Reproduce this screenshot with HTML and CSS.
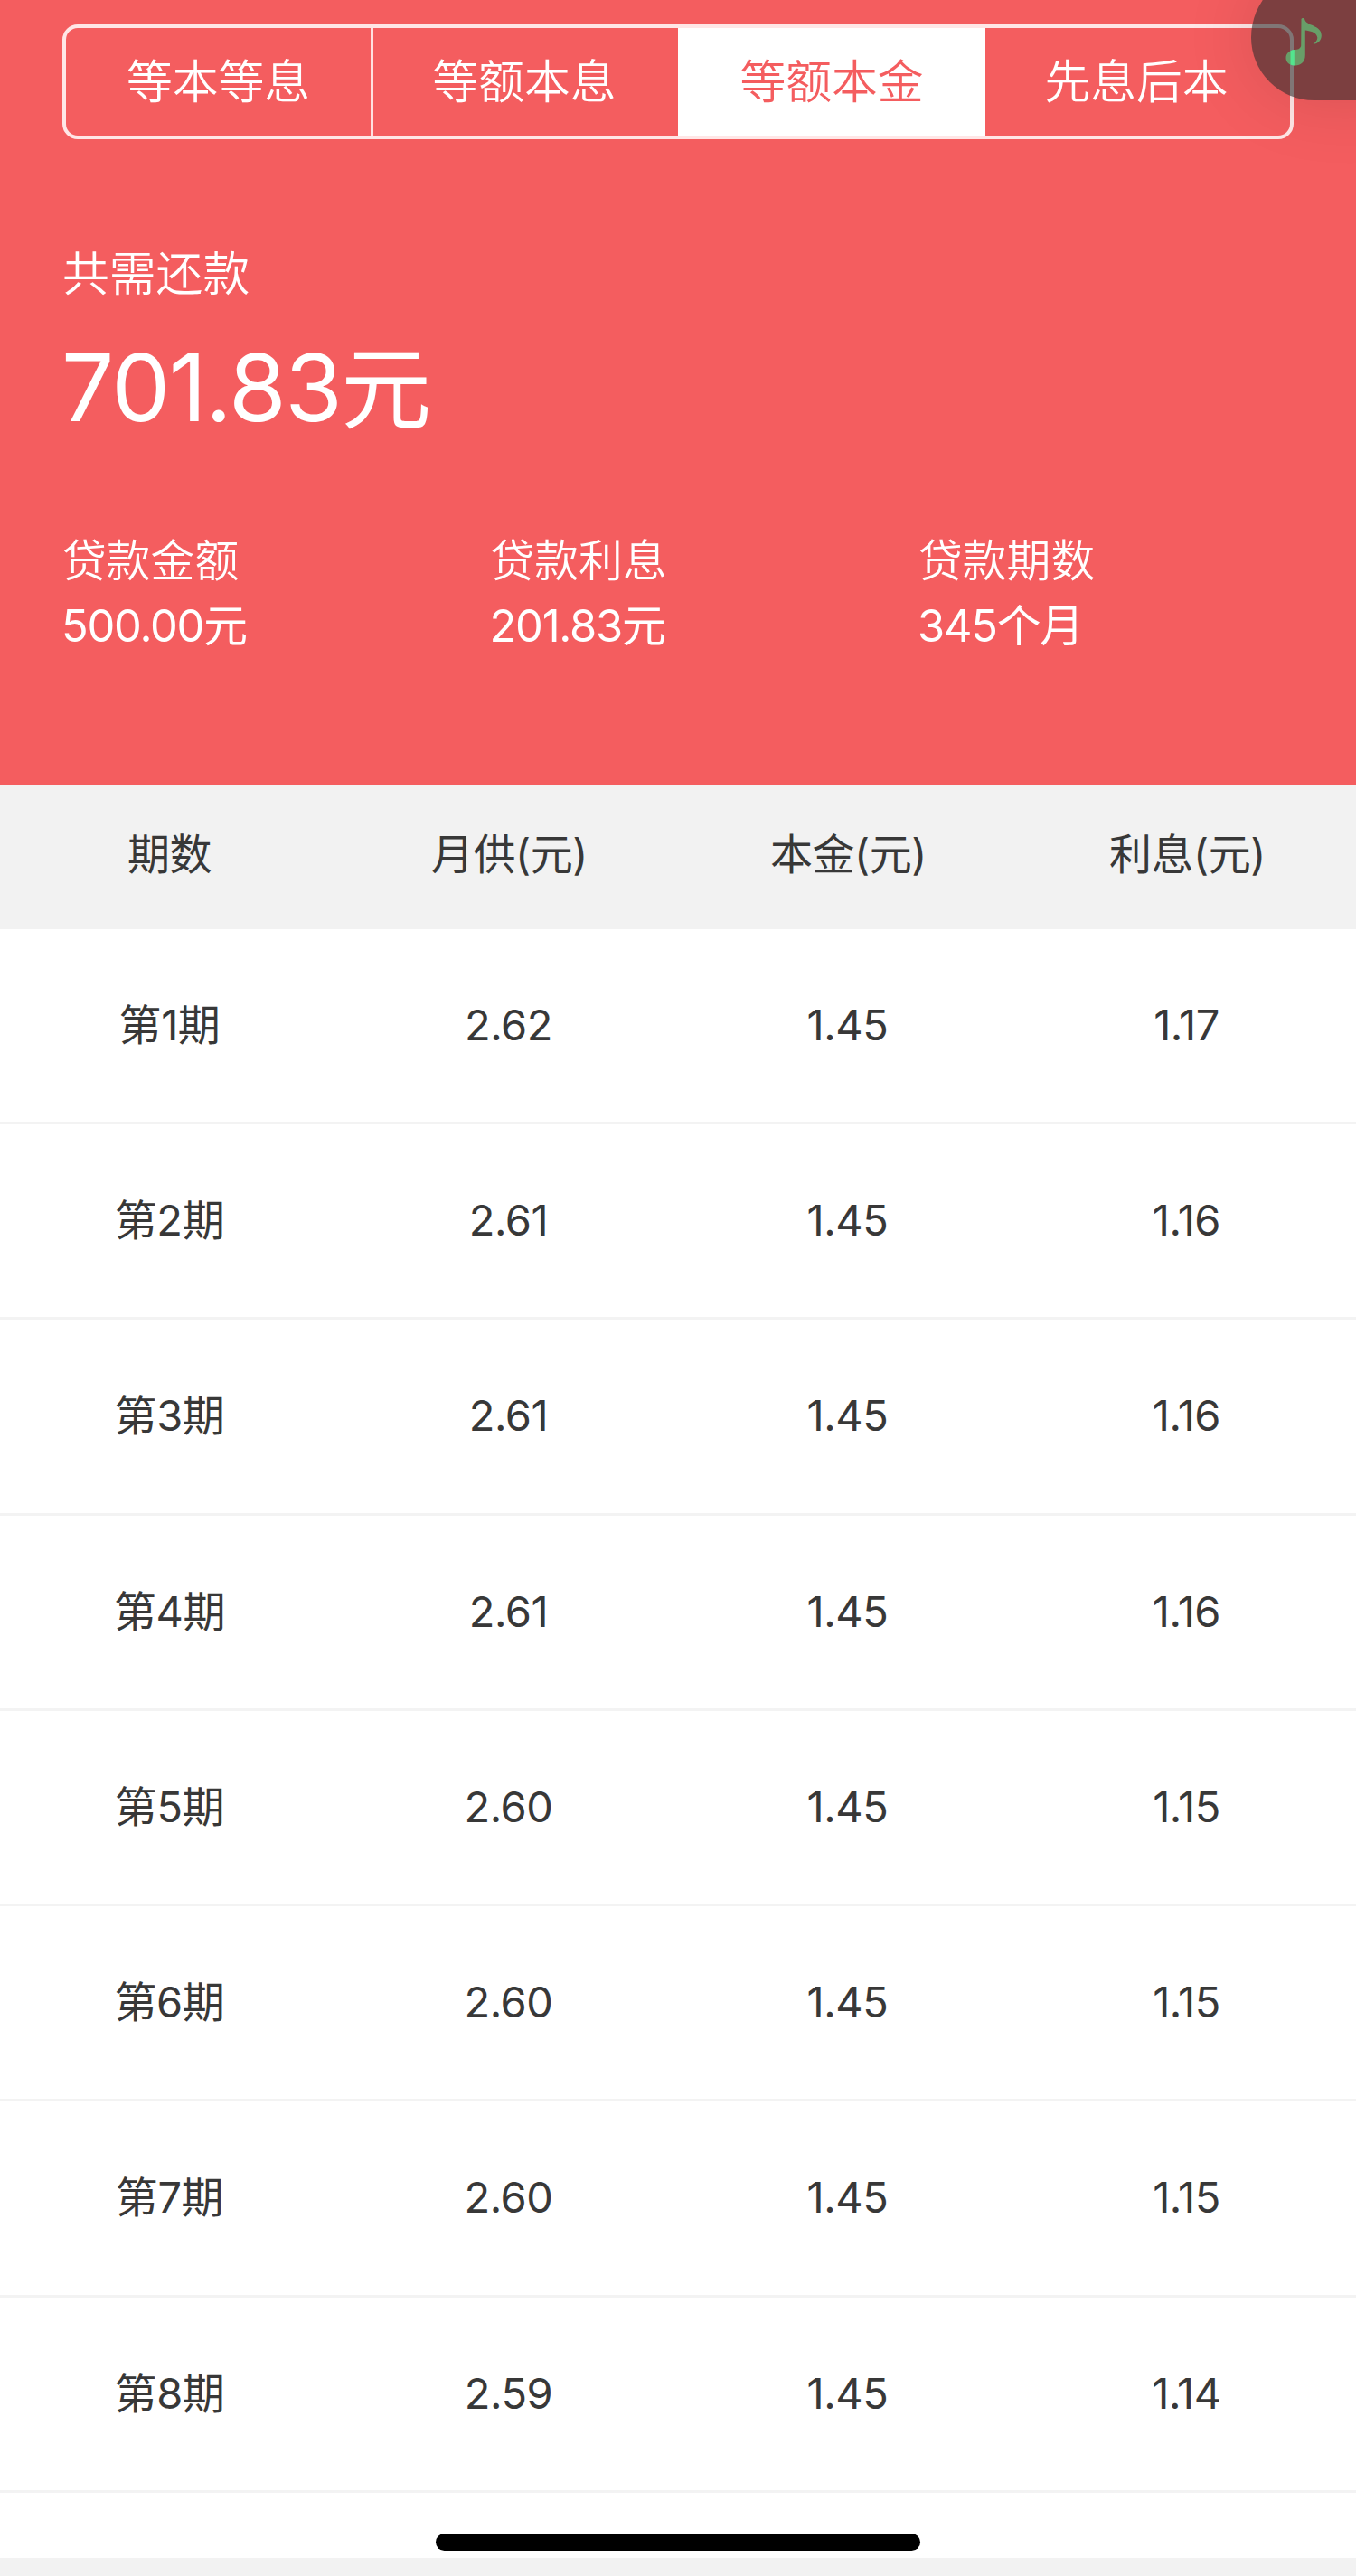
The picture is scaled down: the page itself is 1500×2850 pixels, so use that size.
FILE: index.html
```html
<!DOCTYPE html>
<html lang="zh-CN">
<head>
<meta charset="utf-8">
<title>还款计划</title>
<link rel="stylesheet" href="styles.css">
</head>
<body>
<main class="page">
  <section class="hero">
    <nav class="tabs">
      <a class="tab">等本等息</a>
      <a class="tab">等额本息</a>
      <a class="tab active">等额本金</a>
      <a class="tab">先息后本</a>
    </nav>
    <div class="total-label">共需还款</div>
    <div class="total"><span class="total-number">701.83</span>元</div>
    <div class="stats">
      <div class="stat"><div class="stat-label">贷款金额</div><div class="stat-value">500.00元</div></div>
      <div class="stat"><div class="stat-label">贷款利息</div><div class="stat-value">201.83元</div></div>
      <div class="stat"><div class="stat-label">贷款期数</div><div class="stat-value">345个月</div></div>
    </div>
  </section>
  <section class="schedule">
    <div class="head"><span>期数</span><span>月供(元)</span><span>本金(元)</span><span>利息(元)</span></div>
    <div class="row"><span>第1期</span><span>2.62</span><span>1.45</span><span>1.17</span></div>
    <div class="row"><span>第2期</span><span>2.61</span><span>1.45</span><span>1.16</span></div>
    <div class="row"><span>第3期</span><span>2.61</span><span>1.45</span><span>1.16</span></div>
    <div class="row"><span>第4期</span><span>2.61</span><span>1.45</span><span>1.16</span></div>
    <div class="row"><span>第5期</span><span>2.60</span><span>1.45</span><span>1.15</span></div>
    <div class="row"><span>第6期</span><span>2.60</span><span>1.45</span><span>1.15</span></div>
    <div class="row"><span>第7期</span><span>2.60</span><span>1.45</span><span>1.15</span></div>
    <div class="row"><span>第8期</span><span>2.59</span><span>1.45</span><span>1.14</span></div>
  </section>
  <div class="music">
    <svg class="note" viewBox="0 0 40 54" width="40" height="54">
      <path fill="#689e68" d="M17.5 1 C18.5 -0.5 20.5 -0.3 21.2 1.2 C22.5 9 40 7 39.8 19.5 C39.7 24.5 36 28.6 30.5 28.8 C34 26.5 36 23.5 35 20.5 C33.5 15 27 14.5 21.8 13.5 V41 C21.8 48.5 17 52.5 10.5 52.5 C4 52.5 0.5 48.5 0.5 44 C0.5 38.5 5.5 35 10.5 35 C13.5 35 16 34 17.2 31 Z"/>
      <path fill="#53e58e" d="M5.5 36.2 Q7.5 35.1 9.8 35 V52.5 Q7.3 52.3 5.5 51.5 Z"/>
    </svg>
  </div>
  <div class="home-bar"></div>
</main>
</body>
</html>
```

FILE: styles.css
```css
* { box-sizing: border-box; }

body {
  margin: 0;
  font-family: Inter, "Noto Sans CJK SC", sans-serif;
  color: #383838;
  background: #f2f2f2;
}

.page {
  position: relative;
  width: 1500px;
  height: 2850px;
  overflow: hidden;
}

.hero {
  height: 867.5px;
  padding: 27px 69px 0;
  background: #f45d5f;
  color: #fff;
}

.tabs {
  display: flex;
  height: 127px;
  border: 4px solid #ffe6e6;
  border-radius: 17px;
  overflow: hidden;
}

.tab {
  flex: 1;
  border-left: 3px solid #ffe0e0;
  font-family: "Noto Sans CJK SC", sans-serif;
  font-weight: 350;
  font-size: 50.8px;
  line-height: 113px;
  text-align: center;
  text-indent: -3px;
}

.tab:first-child {
  flex-basis: -3px;
  border-left: 0;
  text-indent: 0;
}

.tab.active {
  background: #fff;
  border-color: #fff;
  color: #f45d5f;
}

.tab.active + .tab { border-left: 0; }

.total-label {
  margin-top: 108px;
  font-family: "Noto Sans CJK SC", sans-serif;
  font-weight: 350;
  font-size: 51.8px;
  line-height: 76px;
}

.total {
  height: 130px;
  margin-top: 26px;
  font-size: 100px;
  line-height: 130px;
  white-space: nowrap;
}

.total-number {
  margin-left: -1px;
  font-size: 103px;
  letter-spacing: -1.5px;
}

.stats {
  display: grid;
  grid-template-columns: 473.5px 473.5px 1fr;
  margin-top: 86px;
  font-size: 48.8px;
}

.stat-label, .stat-value {
  height: 76px;
  line-height: 73px;
  white-space: nowrap;
}

.stat-label {
  font-family: "Noto Sans CJK SC", sans-serif;
  font-weight: 350;
}

.stat-value {
  margin-left: -1px;
  letter-spacing: -1.2px;
}

.schedule {
  height: 1962.5px;
  background: #fff;
}

.head, .row {
  display: grid;
  grid-template-columns: repeat(4, 1fr);
  text-align: center;
  font-size: 47px;
}

.head {
  height: 160.2px;
  line-height: 154px;
  background: #f2f2f2;
  letter-spacing: -0.5px;
}

.head span + span { text-indent: 2px; }

.row {
  height: 216.3px;
  line-height: 211px;
  border-bottom: 3px solid #f3f3f3;
  letter-spacing: -0.4px;
}

.music {
  position: absolute;
  top: -32px;
  left: 1384px;
  width: 180px;
  height: 143px;
  border-radius: 76px 0 0 72px;
  background: rgba(43, 43, 43, 0.6);
  box-shadow: 0 0 80px rgba(0, 0, 0, 0.12);
}

.note {
  position: absolute;
  top: 51.5px;
  left: 38px;
}

.home-bar {
  position: absolute;
  top: 2802.5px;
  left: 482px;
  width: 536px;
  height: 19px;
  border-radius: 10px;
  background: #000;
}
```
